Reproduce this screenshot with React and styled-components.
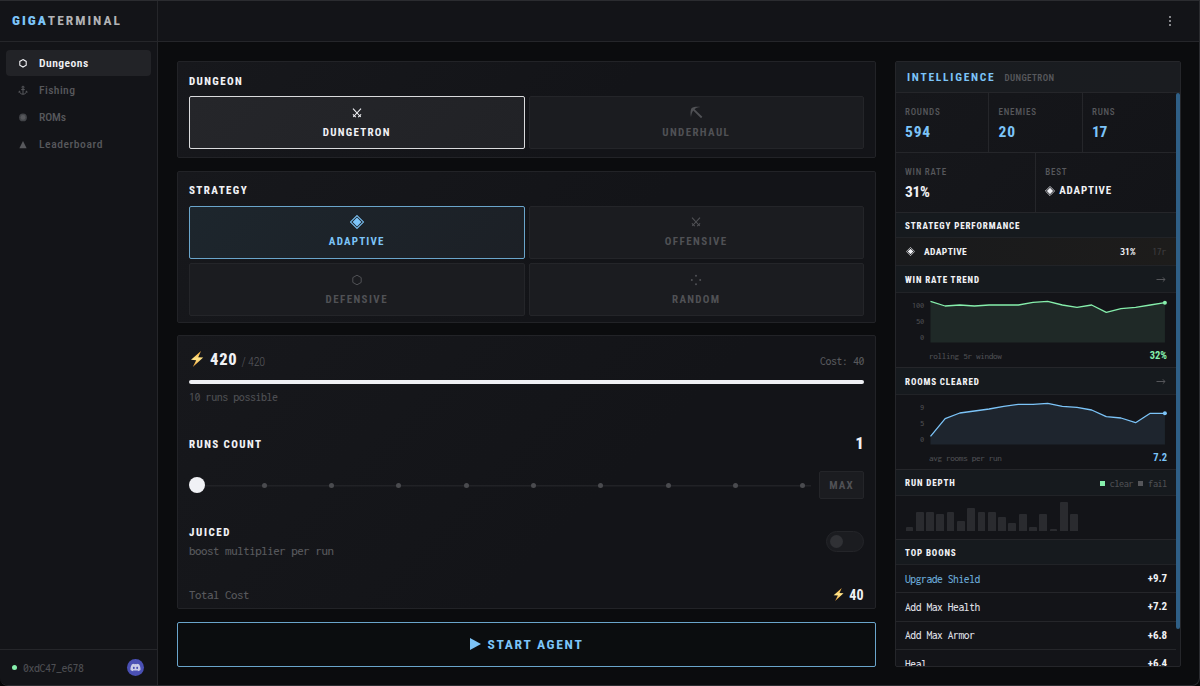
import React from 'react';
import styled, { createGlobalStyle } from 'styled-components';
import { FaDiscord } from 'react-icons/fa';

const GlobalStyle = createGlobalStyle`
  * {
    box-sizing: border-box;
  }
  body {
    margin: 0;
    background: #050607;
    color: #f0f1f5;
    font-family: 'Roboto Condensed', Roboto, sans-serif;
    font-size: 11px;
    overflow: hidden;
  }
`;

const winRate = [8.3, 13, 12, 13, 12, 12, 12, 9.3, 8.3, 12, 14.3, 12, 19.3, 15.7, 14.3, 12, 9.7];
const rooms = [41.3, 23.7, 18, 16, 14, 11.3, 9.3, 9.3, 8.3, 11.3, 12.3, 15, 21.7, 23, 27.7, 18.3, 18.3];
const depth = [4, 19, 19, 17.3, 19, 9.7, 23.3, 19, 19, 13.7, 7.7, 17.3, 4, 17.3, 2, 28.7, 17.3];

const nav = [
  { label: 'Dungeons', icon: 'hex', active: true, spacing: 0.45 },
  { label: 'Fishing', icon: 'anchor', spacing: 0.4 },
  { label: 'ROMs', icon: 'disc', spacing: -0.1 },
  { label: 'Leaderboard', icon: 'triangle', spacing: 0.56 },
];

const boons = [
  { name: 'Upgrade Shield', value: '+9.7', blue: true },
  { name: 'Add Max Health', value: '+7.2' },
  { name: 'Add Max Armor', value: '+6.8' },
  { name: 'Heal', value: '+6.4' },
];

function Icon({ name, size = 12 }) {
  return (
    <Svg width={size} height={size} viewBox="0 0 12 12">
      {name === 'hex' && <path d="M6 1.2l4.2 2.4v4.8L6 10.8 1.8 8.4V3.6z" stroke="currentColor" strokeWidth="1" />}
      {name === 'ring' && <path d="M6 2.6l3.2 1.8v3.8L6 10 2.8 8.2V4.4z" stroke="currentColor" strokeWidth="1.1" />}
      {name === 'anchor' && (
        <g stroke="currentColor" strokeWidth="1">
          <circle cx="6" cy="3.2" r="1" />
          <path d="M6 4.2v6M4.2 5.6h3.6M2.4 7.4c.3 1.9 1.7 2.8 3.600 2.8s3.300-.9 3.600-2.800M1.800 8.500l.6-1.400 1.100.9M10.200 8.500l-.6-1.400-1.100.9" />
        </g>
      )}
      {name === 'disc' && (
        <>
          <circle cx="6" cy="6.4" r="3.9" fill="currentColor" opacity=".7" />
          <circle cx="6" cy="6.4" r="2.4" fill="currentColor" />
        </>
      )}
      {name === 'triangle' && <path d="M6 3l3.6 7.200H2.400z" fill="currentColor" />}
      {name === 'swords' && (
        <g stroke="currentColor" strokeWidth="1.1">
          <path d="M2 1.6l7.800 8.400M10 1.600L2.200 10" />
          <path d="M1.900 7.400l2.900 2.700M10.100 7.400l-2.900 2.700" />
        </g>
      )}
      {name === 'pick' && (
        <>
          <path d="M.9 10.200C.1 6.800.4 3.800 1.500 1.800 3.500.8 6.500.2 9.800 1 7 1.300 5.200 2 3.900 3.300 2.300 4.600 1.400 6.800.9 10.200z" fill="currentColor" />
          <path d="M2.400 2.400l8.400 8.200" stroke="currentColor" strokeWidth="1.700" />
        </>
      )}
      {name === 'diamond' && (
        <>
          <path d="M6 .5L11.500 6 6 11.500.5 6z" stroke="currentColor" strokeWidth=".9" />
          <path d="M6 2.200L9.800 6 6 9.800 2.200 6z" fill="currentColor" />
        </>
      )}
      {name === 'dots' && (
        <g fill="currentColor">
          <circle cx="6" cy="1.8" r="1" />
          <circle cx="6" cy="10.200" r="1" />
          <circle cx="1.800" cy="6" r="1" />
          <circle cx="10.200" cy="6" r="1" />
        </g>
      )}
      {name === 'arrow' && <path d="M1.500 5.500h8.500M7.800 3.300L10 5.500 7.800 7.700" stroke="currentColor" strokeWidth="1" />}
    </Svg>
  );
}

function Bolt({ size }) {
  return (
    <Svg width={size} height={size} viewBox="0 0 16 16">
      <defs>
        <linearGradient id="bolt" x1="0" y1="0" x2="0" y2="1">
          <stop offset="0" stopColor="#f6a834" />
          <stop offset=".5" stopColor="#ffe58a" />
          <stop offset="1" stopColor="#ee9a2c" />
        </linearGradient>
      </defs>
      <path d="M12 0L2 8.800l5.200.4L3.800 16 14.200 6.600l-5-.4z" fill="url(#bolt)" />
    </Svg>
  );
}

function TrendChart({ points, color, labels, caption, value }) {
  const coords = points.map((y, i) => `${i * 14.65 + 0.5},${y}`).join(' ');
  return (
    <Chart>
      <Plot>
        <Axis>
          {labels.map(l => <span key={l}>{l}</span>)}
        </Axis>
        <Svg width="238" height="50" viewBox="0 0 238 50">
          <polygon points={`0.5,49.5 ${coords} 234.9,49.5`} fill={color} opacity=".1" />
          <polyline points={coords} stroke={color} strokeWidth="1.3" strokeLinejoin="round" />
          <circle cx="234.9" cy={points[points.length - 1]} r="2" fill={color} />
        </Svg>
      </Plot>
      <ChartFoot>
        <Mono $size={8.55}>{caption}</Mono>
        <ChartValue $color={color}>{value}</ChartValue>
      </ChartFoot>
    </Chart>
  );
}

function Choice({ icon, label, tone, iconSize, spacing }) {
  return (
    <Option $tone={tone} $spacing={spacing}>
      <OptionIcon><Icon name={icon} size={iconSize} /></OptionIcon>
      {label}
    </Option>
  );
}

export default function App() {
  return (
    <>
      <GlobalStyle />
      <Shell>
        <Header>
          <Brand><b>GIGA</b>TERMINAL</Brand>
          <Menu><i /><i /><i /></Menu>
        </Header>
        <Sidebar>
          <Nav>
            {nav.map(item => (
              <NavItem key={item.label} $active={item.active} $spacing={item.spacing}>
                <Icon name={item.icon === 'hex' ? 'ring' : item.icon} />
                {item.label}
              </NavItem>
            ))}
          </Nav>
          <Account>
            <Online />
            <Mono $size={11}>0xdC47_e678</Mono>
            <Discord><FaDiscord size={11} /></Discord>
          </Account>
        </Sidebar>
        <Main>
          <Controls>
            <Panel>
              <Title>DUNGEON</Title>
              <Options>
                <Choice icon="swords" label="DUNGETRON" tone="white" spacing={1.24} />
                <Choice icon="pick" label="UNDERHAUL" iconSize={13} spacing={1.36} />
              </Options>
            </Panel>
            <Panel>
              <Title>STRATEGY</Title>
              <Options>
                <Choice icon="diamond" label="ADAPTIVE" tone="blue" iconSize={14} spacing={1.2} />
                <Choice icon="swords" label="OFFENSIVE" spacing={1.45} />
                <Choice icon="hex" label="DEFENSIVE" spacing={1.42} />
                <Choice icon="dots" label="RANDOM" spacing={1.28} />
              </Options>
            </Panel>
            <Panel>
              <EnergyRow>
                <Bolt size={16} />
                <Energy>420</Energy>
                <EnergyMax>/ 420</EnergyMax>
                <Mono $size={11} $color="#57585c">Cost: 40</Mono>
              </EnergyRow>
              <EnergyBar />
              <Caption $size={11.1}>10 runs possible</Caption>
              <RunsRow>
                <Label>RUNS COUNT</Label>
                <RunsValue>1</RunsValue>
              </RunsRow>
              <SliderRow>
                <Track>
                  <Stop><Knob /></Stop>
                  {Array.from({ length: 9 }, (_, i) => <Stop key={i}><Tick /></Stop>)}
                </Track>
                <MaxButton>MAX</MaxButton>
              </SliderRow>
              <JuicedRow>
                <div>
                  <Label $spacing={1.58}>JUICED</Label>
                  <Mono $size={12.05} $line={17.5} $color="#57585c">boost multiplier per run</Mono>
                </div>
                <Toggle />
              </JuicedRow>
              <TotalRow>
                <Mono $size={12} $color="#57585c">Total Cost</Mono>
                <Total><Bolt size={13} />40</Total>
              </TotalRow>
            </Panel>
            <StartButton>
              <svg width="11" height="12" viewBox="0 0 11 12"><path d="M0 0l11 6-11 6z" fill="currentColor" /></svg>
              START AGENT
            </StartButton>
          </Controls>
          <Intel>
            <IntelHead>
              INTELLIGENCE <small>DUNGETRON</small>
            </IntelHead>
            <Scroller>
              <Feed>
                <Stats>
                  <Stat><StatName>ROUNDS</StatName><StatValue $blue>594</StatValue></Stat>
                  <Stat><StatName>ENEMIES</StatName><StatValue $blue>20</StatValue></Stat>
                  <Stat><StatName>RUNS</StatName><StatValue $blue $tight>17</StatValue></Stat>
                </Stats>
                <Stats>
                  <Stat><StatName>WIN RATE</StatName><StatValue $tight>31%</StatValue></Stat>
                  <Stat>
                    <StatName>BEST</StatName>
                    <Best><Icon name="diamond" size={10} />ADAPTIVE</Best>
                  </Stat>
                </Stats>
                <SectionHead $height={25}>STRATEGY PERFORMANCE</SectionHead>
                <StrategyRow>
                  <Icon name="diamond" size={9} />
                  <b>ADAPTIVE</b>
                  <Mono $size={10.2} $color="#f0f1f5" $weight={700}>31%</Mono>
                  <Rounds $size={9.2} $color="#3d3d3f">17r</Rounds>
                </StrategyRow>
                <SectionHead $height={27}>WIN RATE TREND<Icon name="arrow" /></SectionHead>
                <TrendChart points={winRate} color="#86efac" labels={[100, 50, 0]} caption="rolling 5r window" value="32%" />
                <SectionHead $height={27}>ROOMS CLEARED<Icon name="arrow" /></SectionHead>
                <TrendChart points={rooms} color="#7cc4f8" labels={[9, 5, 0]} caption="avg rooms per run" value="7.2" />
                <SectionHead $height={26}>
                  RUN DEPTH
                  <Legend>
                    <Swatch $color="#86efac" /><Mono $size={9.4}>clear</Mono>
                    <Swatch $color="#55565a" /><Mono $size={9.4}>fail</Mono>
                  </Legend>
                </SectionHead>
                <Bars>
                  {depth.map((h, i) => <Bar key={i} style={{ height: h }} />)}
                </Bars>
                <SectionHead $height={25}>TOP BOONS</SectionHead>
                {boons.map(b => (
                  <Boon key={b.name}>
                    <Mono $size={10.7} $color={b.blue ? '#69a8d6' : '#dcdde0'}>{b.name}</Mono>
                    <b>{b.value}</b>
                  </Boon>
                ))}
              </Feed>
              <Scrollbar />
            </Scroller>
          </Intel>
        </Main>
      </Shell>
    </>
  );
}

const Svg = styled.svg`
  display: block;
  flex: none;
  fill: none;
`;

const Shell = styled.div`
  display: grid;
  grid-template: 41px 1fr / 158px 1fr;
  width: 1200px;
  height: 686px;
  overflow: hidden;
  background: #0b0c0e;
  border: solid #2b2c30;
  border-width: 1px 1px 1px 0;
  border-radius: 0 0 8px 8px;
`;

const Header = styled.header`
  grid-column: 1 / -1;
  display: flex;
  align-items: center;
  justify-content: space-between;
  background: #131418;
  border-bottom: 1px solid #25262a;
`;

const Brand = styled.div`
  width: 158px;
  height: 40px;
  padding-left: 12px;
  border-right: 1px solid #25262a;
  font-size: 13.5px;
  font-weight: 700;
  line-height: 39px;
  letter-spacing: 1.98px;
  color: #b2b3b6;
  b {
    color: #7cc4f8;
  }
`;

const Menu = styled.div`
  display: grid;
  gap: 2px;
  margin-right: 28px;
  i {
    width: 2px;
    height: 2px;
    background: #85868a;
  }
`;

const Sidebar = styled.aside`
  display: flex;
  flex-direction: column;
  justify-content: space-between;
  background: #131418;
  border-right: 1px solid #25262a;
`;

const Nav = styled.nav`
  display: grid;
  gap: 1px;
  padding: 8px 6px;
`;

const NavItem = styled.a`
  display: flex;
  align-items: center;
  gap: 10px;
  height: 26px;
  padding-left: 11px;
  border-radius: 4px;
  background: ${p => (p.$active ? '#222327' : 'transparent')};
  color: ${p => (p.$active ? '#f0f1f5' : '#57585c')};
  font-size: 11.6px;
  font-weight: ${p => (p.$active ? 600 : 500)};
  letter-spacing: ${p => p.$spacing}px;
`;

const Account = styled.div`
  display: flex;
  align-items: center;
  height: 36px;
  padding: 0 13px 0 12px;
  border-top: 1px solid #25262a;
`;

const Online = styled.span`
  width: 5px;
  height: 5px;
  margin-right: 6px;
  border-radius: 50%;
  background: #86efac;
`;

const Discord = styled.span`
  display: flex;
  align-items: center;
  justify-content: center;
  width: 17px;
  height: 17px;
  margin-left: auto;
  border-radius: 50%;
  background: #4a50b4;
  color: #c9cbe6;
`;

/* Inconsolata drawn a little larger and tracked in, so one character stays half of $size wide */
const Mono = styled.div`
  font-family: Inconsolata, 'Liberation Mono', monospace;
  font-size: ${p => p.$size * 1.08}px;
  font-weight: ${p => p.$weight || 500};
  line-height: ${p => (p.$line ? `${p.$line}px` : 'normal')};
  letter-spacing: -0.037em;
  white-space: nowrap;
  color: ${p => p.$color || '#4d4e52'};
`;

const Main = styled.main`
  display: grid;
  grid-template-columns: 699px 286px;
  gap: 19px;
  padding: 19px 18px 18px 19px;
  min-height: 0;
`;

const Controls = styled.div`
  display: grid;
  grid-template-rows: 97px 152px 274px 45px;
  align-content: space-between;
`;

const Panel = styled.section`
  padding: 0 11px;
  border: 1px solid #222327;
  border-radius: 2px;
  background: linear-gradient(135deg, #17181c, #131418 60%);
`;

const Label = styled.div`
  font-size: 11px;
  font-weight: 800;
  line-height: 17.5px;
  letter-spacing: ${p => p.$spacing || 1.38}px;
`;

const Title = styled(Label)`
  padding: 10.5px 0 6px;
`;

const Options = styled.div`
  display: grid;
  grid-template-columns: 1fr 1fr;
  grid-auto-rows: 53.3px;
  gap: 4px;
`;

const tones = {
  white: { border: '#dadbdd', text: '#f0f1f5', bg: 'linear-gradient(135deg, #25262a, #212226)' },
  blue: { border: '#6aa5cb', text: '#7cc4f8', bg: 'linear-gradient(135deg, #1d262d, #1c2026)' },
  none: { border: '#242529', text: '#505155', bg: '#1b1c20' },
};

const Option = styled.div`
  display: flex;
  flex-direction: column;
  align-items: center;
  justify-content: center;
  gap: 4px;
  border: 1px solid ${p => tones[p.$tone || 'none'].border};
  border-radius: 2px;
  background: ${p => tones[p.$tone || 'none'].bg};
  color: ${p => tones[p.$tone || 'none'].text};
  font-size: 11px;
  font-weight: 700;
  line-height: 16px;
  letter-spacing: ${p => p.$spacing}px;
`;

const OptionIcon = styled.span`
  display: flex;
  align-items: center;
  height: 16px;
`;

const EnergyRow = styled.div`
  display: flex;
  align-items: center;
  height: 26px;
  margin-top: 10px;
  ${Mono} {
    margin: 4px 0 0 auto;
  }
`;

const Energy = styled.span`
  margin: 0 4px 0 5px;
  padding-top: 1px;
  font-size: 16.5px;
  font-weight: 800;
  letter-spacing: 0.8px;
`;

const EnergyMax = styled.span`
  padding-top: 5px;
  color: #57585c;
  font-size: 12px;
  font-weight: 300;
  letter-spacing: -0.24px;
`;

const EnergyBar = styled.div`
  height: 4px;
  margin-top: 7.5px;
  border-radius: 2px;
  background: #eff0f4;
`;

const Caption = styled(Mono)`
  height: 14px;
  margin-top: 6.5px;
  line-height: 14px;
`;

const RunsRow = styled.div`
  display: flex;
  align-items: center;
  justify-content: space-between;
  height: 20px;
  margin-top: 30.5px;
`;

const RunsValue = styled.span`
  padding-bottom: 3px;
  font-size: 17px;
  font-weight: 800;
`;

const SliderRow = styled.div`
  display: flex;
  gap: 8px;
  height: 28px;
  margin-top: 16.5px;
`;

const Track = styled.div`
  flex: 1;
  display: flex;
  align-items: center;
  justify-content: space-between;
  background: linear-gradient(#212226, #212226) center / 100% 1.5px no-repeat;
`;

const Stop = styled.span`
  display: flex;
  justify-content: center;
  width: 16px;
`;

const Knob = styled.span`
  width: 16px;
  height: 16px;
  border-radius: 50%;
  background: #f0f1f5;
`;

const Tick = styled.span`
  width: 5px;
  height: 5px;
  border-radius: 50%;
  background: #4a4b4f;
`;

const MaxButton = styled.button`
  width: 45px;
  padding: 0;
  border: 1px solid #242529;
  border-radius: 2px;
  background: #1b1c20;
  color: #505155;
  font: 700 11px 'Roboto Condensed', Roboto, sans-serif;
  letter-spacing: 1.17px;
`;

const JuicedRow = styled.div`
  display: flex;
  align-items: center;
  justify-content: space-between;
  height: 35px;
  margin-top: 25px;
`;

const Toggle = styled.div`
  width: 38px;
  height: 21px;
  padding: 3px;
  border: 1px solid #242529;
  border-radius: 11px;
  background: #1b1c20;
  &::before {
    content: '';
    display: block;
    width: 13px;
    height: 13px;
    border-radius: 50%;
    background: #303135;
  }
`;

const TotalRow = styled.div`
  display: flex;
  align-items: center;
  justify-content: space-between;
  height: 20px;
  margin-top: 25.5px;
`;

const Total = styled.span`
  display: flex;
  align-items: center;
  gap: 4px;
  font-size: 14px;
  font-weight: 700;
  letter-spacing: 0.3px;
`;

const StartButton = styled.button`
  display: flex;
  align-items: center;
  justify-content: center;
  gap: 7px;
  padding: 0;
  border: 1px solid #6aa5cb;
  border-radius: 2px;
  background: #0b0d0f;
  color: #7cc4f8;
  font: 700 13.6px 'Roboto Condensed', Roboto, sans-serif;
  letter-spacing: 1.68px;
`;

const Intel = styled.section`
  display: flex;
  flex-direction: column;
  min-height: 0;
  overflow: hidden;
  border: 1px solid #25262a;
  border-radius: 2px;
  background: #131418;
`;

const IntelHead = styled.div`
  flex: none;
  height: 31px;
  padding-left: 11px;
  border-bottom: 1px solid #25262a;
  background: linear-gradient(90deg, #191c20, #1a1c20);
  color: #7cc4f8;
  font-size: 11.5px;
  font-weight: 700;
  line-height: 31px;
  letter-spacing: 1.74px;
  small {
    margin-left: 4.5px;
    color: #57585c;
    font-size: 9px;
    font-weight: 600;
    letter-spacing: 0.42px;
  }
`;

const Scroller = styled.div`
  display: flex;
  flex: 1;
  min-height: 0;
  overflow: hidden;
`;

const Feed = styled.div`
  width: 280px;
`;

const Scrollbar = styled.div`
  width: 4px;
  height: 536px;
  border-radius: 2px;
  background: #2f5f86;
`;

const Stats = styled.div`
  display: flex;
  height: 60px;
  border-bottom: 1px solid #25262a;
  background: linear-gradient(135deg, #16171b, #131418);
`;

const Stat = styled.div`
  flex: 1;
  padding: 10.5px 0 0 9px;
  & + & {
    margin-left: -1px;
    padding-left: 9.5px;
    border-left: 1px solid #25262a;
  }
`;

const StatName = styled.div`
  color: #57585c;
  font-size: 9px;
  font-weight: 500;
  line-height: 17px;
  letter-spacing: 0.78px;
`;

const StatValue = styled.div`
  color: ${p => (p.$blue ? '#7cc4f8' : '#f0f1f5')};
  font-size: 15.5px;
  font-weight: 700;
  line-height: 23px;
  letter-spacing: ${p => (p.$tight ? -0.3 : 0.8)}px;
`;

const Best = styled.div`
  display: flex;
  align-items: center;
  gap: 4px;
  height: 20px;
  font-size: 11px;
  font-weight: 700;
  letter-spacing: 0.8px;
`;

const SectionHead = styled.div`
  display: flex;
  align-items: center;
  justify-content: space-between;
  height: ${p => p.$height}px;
  padding: 1px 9px 0;
  border-bottom: 1px solid #212327;
  background: #161a1e;
  font-size: 9px;
  font-weight: 800;
  letter-spacing: 0.86px;
  ${Svg} {
    color: #55565a;
  }
`;

const StrategyRow = styled.div`
  display: flex;
  align-items: center;
  height: 28px;
  padding: 0 10px;
  border-bottom: 1px solid #212327;
  background: linear-gradient(90deg, #191a1c, #1d1c1b);
  b {
    flex: 1;
    margin-left: 9px;
    font-size: 9.6px;
    letter-spacing: 0.35px;
  }
`;

const Rounds = styled(Mono)`
  width: 31px;
  text-align: right;
`;

const Chart = styled.div`
  height: 75px;
  border-bottom: 1px solid #25262a;
`;

const Plot = styled.div`
  display: flex;
`;

const Axis = styled.div`
  display: grid;
  grid-auto-rows: 16.2px;
  width: 34px;
  height: 50px;
  padding: 5px 6px 0 0;
  color: #4d4e52;
  font: 500 8.4px / 16.2px Inconsolata, 'Liberation Mono', monospace;
  letter-spacing: -0.2px;
  text-align: right;
`;

const ChartFoot = styled.div`
  display: flex;
  align-items: center;
  justify-content: space-between;
  height: 24px;
  padding: 1px 9px 0 33px;
`;

const ChartValue = styled.span`
  color: ${p => p.$color};
  font-size: 10.5px;
  font-weight: 700;
`;

const Legend = styled.div`
  display: flex;
  align-items: center;
  gap: 5px;
`;

const Swatch = styled.i`
  width: 5px;
  height: 5px;
  background: ${p => p.$color};
`;

const Bars = styled.div`
  display: flex;
  align-items: flex-end;
  gap: 2.5px;
  height: 44px;
  padding: 0 9.5px 8px;
  border-bottom: 1px solid #25262a;
`;

const Bar = styled.div`
  width: 7.8px;
  border-radius: 1px 1px 0 0;
  background: #2a2b2f;
`;

const Boon = styled.div`
  display: flex;
  align-items: center;
  justify-content: space-between;
  height: 28.6px;
  padding: 0 9px;
  border-bottom: 1px solid #25262a;
  b {
    font-size: 11px;
    letter-spacing: -0.1px;
  }
  &:nth-last-child(4) {
    height: 28px;
  }
`;
